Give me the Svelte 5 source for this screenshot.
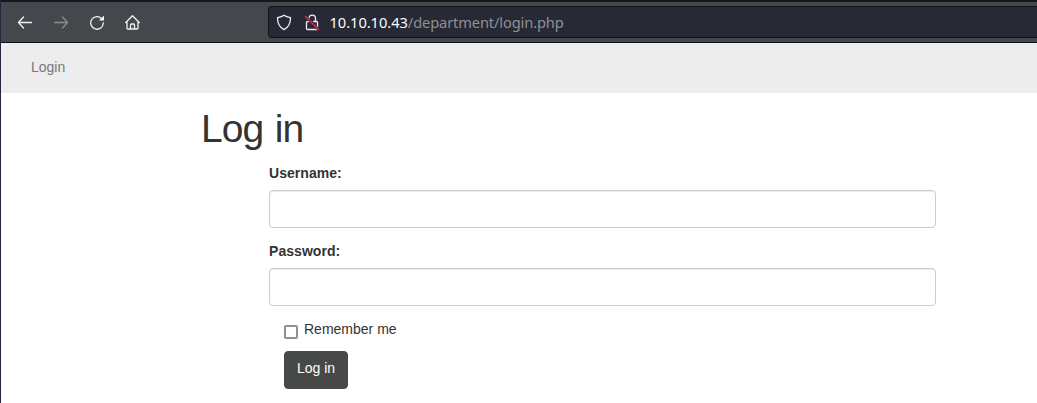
<script>
  let username = $state('');
  let password = $state('');
  let remember = $state(false);
</script>

<div class="window">
  <header class="toolbar">
    <button class="tool" aria-label="Back">
      <svg width="16" height="16" viewBox="0 0 16 16"><path d="M14.500 8.500h-13M6.500 3l-5 5.500 5 5.500" /></svg>
    </button>
    <button class="tool forward" aria-label="Forward">
      <svg width="16" height="16" viewBox="0 0 16 16"><path d="M1.500 8.500h13M9.500 3l5 5.500-5 5.500" /></svg>
    </button>
    <button class="tool" aria-label="Reload">
      <svg width="16" height="16" viewBox="0 0 16 16"><path d="M12.700 4.700A6.300 6.300 0 1 0 14.300 9" /><path class="solid" d="M15 1.500v5H10z" /></svg>
    </button>
    <button class="tool" aria-label="Home">
      <svg width="16" height="16" viewBox="0 0 16 16"><path d="M.8 8.500 7.500 1.700l6.700 6.800M2 8v6a1 1 0 0 0 1 1h9a1 1 0 0 0 1-1V8M5.500 15v-4a1 1 0 0 1 1-1h2a1 1 0 0 1 1 1v4" /></svg>
    </button>
    <div class="address">
      <svg class="shield" width="16" height="17" viewBox="0 0 16 17"><path d="M8 1.200c1.800 1.400 4 2 6.500 2.500 0 4.700-1.500 9.300-6.500 11.900C3 13 1.500 8.400 1.500 3.700 4 3.200 6.200 2.600 8 1.200z" /></svg>
      <svg class="lock" width="16" height="17" viewBox="0 0 16 17"><path d="M5 4.300a3.200 3.200 0 0 1 6.500 0V7.500M9.500 7.500h3a1 1 0 0 1 1 1V14M5 7.500H3.500a1 1 0 0 0-1 1v6a1 1 0 0 0 1 1h9.500" /><path class="gap" d="m1.500 2.500 13 13" /><path class="slash" d="m1.500 2.500 13 13" /></svg>
      <span class="url"><b>10.10.10.43</b>/department/login.php</span>
    </div>
  </header>
  <nav><a href="#login">Login</a></nav>
  <main>
    <h1>Log in</h1>
    <form onsubmit={(e) => e.preventDefault()}>
      <label class="name" for="username">Username:</label>
      <input class="field" id="username" type="text" bind:value={username} />
      <label class="name" for="password">Password:</label>
      <input class="field" id="password" type="password" bind:value={password} />
      <label class="remember"><input type="checkbox" bind:checked={remember} />Remember me</label>
      <button class="submit" type="submit">Log in</button>
    </form>
  </main>
</div>

<style>
  :global(body) { margin: 0; overflow: hidden; }
  * { box-sizing: border-box; }
  .window {
    height: 403px;
    border-left: 1px solid #25263a;
    background: #fff;
    color: #333;
    font: 14px/20px "Liberation Sans", Arial, sans-serif;
    overflow: hidden;
  }
  .toolbar {
    height: 43px;
    display: flex;
    align-items: center;
    padding-left: 16px;
    background: #44474c;
    border-top: 2px solid #17181e;
    border-bottom: 1px solid #0d0f18;
  }
  .tool {
    width: 16px;
    height: 16px;
    margin-right: 20px;
    padding: 0;
    border: 0;
    background: none;
    color: #f3f3f3;
    flex: none;
  }
  .forward { color: #8b8d90; }
  svg { display: block; flex: none; fill: none; stroke: currentColor; stroke-width: 1.3; stroke-linecap: round; stroke-linejoin: round; }
  .solid { fill: currentColor; stroke: none; }
  .address {
    flex: 1;
    height: 32px;
    display: flex;
    align-items: center;
    margin-left: 107px;
    padding-left: 7px;
    background: #272935;
    border: 1px solid #10121a;
    border-right: 0;
    border-radius: 4px 0 0 4px;
    color: #eee;
  }
  .lock { margin-left: 12px; }
  .gap { stroke: #272935; stroke-width: 2.6; }
  .slash { stroke: #e22850; stroke-width: 1.5; }
  .url { margin-left: 9.500px; color: #8f9095; font: 14.67px/20px "Noto Sans", sans-serif; letter-spacing: -0.13px; white-space: nowrap; }
  .url b { font-weight: 400; color: #fbfbfe; letter-spacing: -0.05px; }
  nav { height: 50px; padding: 14px 30px; background: #ededed; }
  nav a { color: #777; text-decoration: none; }
  main { width: 735px; margin-left: 200px; }
  h1 { margin: 0; padding-top: 14px; font-size: 39px; font-weight: 400; line-height: 43px; letter-spacing: -0.900px; word-spacing: 1.500px; }
  form { margin-left: 68px; padding-top: 13px; }
  .name { display: block; height: 27px; font-weight: 700; letter-spacing: 0.05px; }
  .field {
    display: block;
    width: 667px;
    height: 38px;
    margin: 0 0 13px;
    padding: 8px 12px;
    border: 1px solid #ccc;
    border-radius: 4px;
    outline: 0;
    font: inherit;
    background: #fff;
    box-shadow: inset 0 1px 1px rgba(0, 0, 0, 0.075);
  }
  .remember { display: flex; height: 32px; margin-left: 15px; }
  .remember input {
    appearance: none;
    width: 14px;
    height: 14px;
    margin: 6px 6px 0 0;
    border: 2px solid #8f8f9d;
    border-radius: 2px;
    background: #fff;
  }
  .remember input:checked { background: #474949; }
  .submit {
    display: block;
    width: 64px;
    height: 38px;
    margin-left: 15px;
    padding: 0 0 4px;
    border: 1px solid #474949;
    border-radius: 4px;
    background: #474949;
    color: #fff;
    font: inherit;
  }
</style>
